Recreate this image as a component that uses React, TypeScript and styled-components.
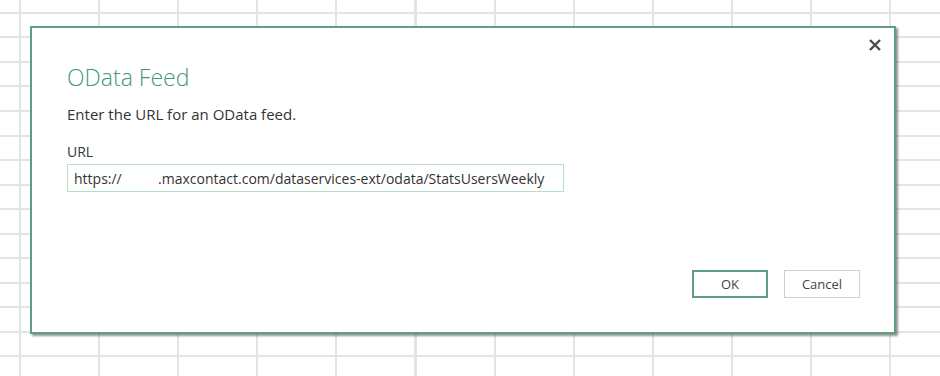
import React from "react";
import styled, { createGlobalStyle } from "styled-components";

const Global = createGlobalStyle`
  html, body { margin: 0; padding: 0; }
  body {
    width: 940px;
    height: 376px;
    overflow: hidden;
    background-color: #ffffff;
    background-image:
      repeating-linear-gradient(to right, transparent 0px, transparent 19px, #e4e4e4 19px, #e4e4e4 21px, transparent 21px, transparent 79.1px),
      repeating-linear-gradient(to bottom, transparent 0px, transparent 12px, #e4e4e4 12px, #e4e4e4 14px, transparent 14px, transparent 24.5px);
    font-family: "Open Sans", "Noto Sans", sans-serif;
  }
`;

const Page = styled.div`
  padding: 26px 0 0 30px;
`;

const Dialog = styled.div`
  position: relative;
  box-sizing: border-box;
  width: 866px;
  height: 308px;
  background: #ffffff;
  border: 2px solid #5e9f80;
  box-shadow: 2px 2px 2px rgba(60, 60, 60, 0.55);
  display: flex;
  flex-direction: column;
  padding: 34px 35px 34px 35px;
`;

const Close = styled.button`
  position: absolute;
  top: 8px;
  right: 10px;
  width: 18px;
  height: 18px;
  padding: 0;
  border: none;
  background: transparent;
  display: flex;
  align-items: center;
  justify-content: center;
`;

const Title = styled.h1`
  margin: 0;
  font-family: "Open Sans", sans-serif;
  font-weight: 300;
  font-size: 23px;
  line-height: 30px;
  color: #46977a;
`;

const Subtitle = styled.p`
  margin: 13px 0 0 0;
  font-size: 15px;
  line-height: 18px;
  color: #333333;
`;

const FieldLabel = styled.label`
  display: block;
  margin-top: 20px;
  font-size: 14px;
  line-height: 18px;
  color: #333333;
`;

const Input = styled.div`
  box-sizing: border-box;
  margin-top: 3px;
  width: 497px;
  height: 28px;
  border: 1.5px solid #b8dec9;
  padding: 0 6px;
  display: flex;
  align-items: center;
  font-size: 14px;
  color: #333333;
  white-space: pre;
`;

const Spacer = styled.div`
  flex: 1;
`;

const Footer = styled.div`
  display: flex;
  justify-content: flex-end;
  gap: 16px;
  padding-top: 2px;
  margin-right: -1px;
`;

const Button = styled.button<{ $primary?: boolean }>`
  box-sizing: border-box;
  width: 76px;
  height: 28px;
  background: #ffffff;
  border: ${(p) => (p.$primary ? "2px solid #5e9f80" : "1.5px solid #d0d0d0")};
  font-family: "Open Sans", sans-serif;
  font-size: 13px;
  color: #444444;
  padding: 0;
`;

export default function App() {
  return (
    <>
      <Global />
      <Page>
        <Dialog>
          <Close aria-label="Close">
            <svg width="14" height="14" viewBox="0 0 14 14">
              <path d="M2 2 L12 12 M12 2 L2 12" stroke="#4a4a4a" strokeWidth="2.4" strokeLinecap="butt" />
            </svg>
          </Close>
          <Title>OData Feed</Title>
          <Subtitle>Enter the URL for an OData feed.</Subtitle>
          <FieldLabel>URL</FieldLabel>
          <Input>{"https://          .maxcontact.com/dataservices-ext/odata/StatsUsersWeekly"}</Input>
          <Spacer />
          <Footer>
            <Button $primary>OK</Button>
            <Button>Cancel</Button>
          </Footer>
        </Dialog>
      </Page>
    </>
  );
}
